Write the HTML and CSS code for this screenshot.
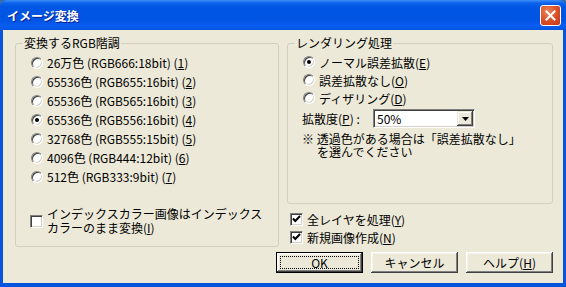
FILE: index.html
```html
<!DOCTYPE html>
<html lang="ja">
<head>
    <meta charset="UTF-8">
    <title>イメージ変換</title>
    <link rel="stylesheet" href="styles.css">
</head>
<body>

<div class="window">
    <div class="titlebar">
        <span class="title">イメージ変換</span>
        <button class="close-btn" aria-label="閉じる">
            <svg width="11" height="11" viewBox="0 0 11 11">
                <path d="M1.5 1.5 L9.5 9.5 M9.5 1.5 L1.5 9.5" stroke="#fff" stroke-width="2" stroke-linecap="square"/>
            </svg>
        </button>
    </div>

    <div class="dialog">
        <div class="panes">
            <fieldset class="group group-left">
                <legend>変換するRGB階調</legend>
                <label class="radio-row"><span class="radio"></span><span>26万色 (RGB666:18bit) (<u>1</u>)</span></label>
                <label class="radio-row"><span class="radio"></span><span>65536色 (RGB655:16bit) (<u>2</u>)</span></label>
                <label class="radio-row"><span class="radio"></span><span>65536色 (RGB565:16bit) (<u>3</u>)</span></label>
                <label class="radio-row"><span class="radio checked"></span><span>65536色 (RGB556:16bit) (<u>4</u>)</span></label>
                <label class="radio-row"><span class="radio"></span><span>32768色 (RGB555:15bit) (<u>5</u>)</span></label>
                <label class="radio-row"><span class="radio"></span><span>4096色 (RGB444:12bit) (<u>6</u>)</span></label>
                <label class="radio-row"><span class="radio"></span><span>512色 (RGB333:9bit) (<u>7</u>)</span></label>

                <label class="check-row check-multi">
                    <span class="checkbox"></span>
                    <span>インデックスカラー画像はインデックス<br>カラーのまま変換(<u>I</u>)</span>
                </label>
            </fieldset>

            <div class="right-col">
                <fieldset class="group group-right">
                    <legend>レンダリング処理</legend>
                    <label class="radio-row narrow"><span class="radio checked"></span><span>ノーマル誤差拡散(<u>E</u>)</span></label>
                    <label class="radio-row narrow"><span class="radio"></span><span>誤差拡散なし(<u>O</u>)</span></label>
                    <label class="radio-row narrow"><span class="radio"></span><span>ディザリング(<u>D</u>)</span></label>

                    <div class="spread-row">
                        <span class="spread-label">拡散度(<u>P</u>) :</span>
                        <div class="combo">
                            <span class="combo-value">50%</span>
                            <span class="combo-arrow">
                                <svg width="7" height="4" viewBox="0 0 7 4"><path d="M0 0 H7 L3.5 4 Z" fill="#000"/></svg>
                            </span>
                        </div>
                    </div>

                    <p class="note">※ 透過色がある場合は「誤差拡散なし」<br><span class="note-indent">を選んでください</span></p>
                </fieldset>

                <label class="check-row first"><span class="checkbox checked"></span><span>全レイヤを処理(<u>Y</u>)</span></label>
                <label class="check-row"><span class="checkbox checked"></span><span>新規画像作成(<u>N</u>)</span></label>
            </div>
        </div>

        <div class="buttons">
            <button class="btn btn-default"><span class="focus">OK</span></button>
            <button class="btn">キャンセル</button>
            <button class="btn">ヘルプ(<u>H</u>)</button>
        </div>
    </div>
</div>

</body>
</html>
```

FILE: styles.css
```css
html, body {
    margin: 0;
    padding: 0;
    background: #3a6ea5;
}

body {
    font-family: "Noto Sans CJK JP", "Liberation Sans", sans-serif;
    font-size: 12px;
    color: #000;
}

u {
    text-decoration: underline;
    text-underline-offset: 1px;
}

.window {
    width: 566px;
    height: 287px;
    display: flex;
    flex-direction: column;
    background: #0855dd;
    border-radius: 7px 7px 0 0;
    box-sizing: border-box;
}

.titlebar {
    height: 30px;
    flex: none;
    display: flex;
    align-items: center;
    justify-content: space-between;
    padding: 0 5px 0 7px;
    border-radius: 7px 7px 0 0;
    background: linear-gradient(to bottom,
        #3d8ff7 0px, #0d62ec 3px, #0056e4 7px, #0054e3 20px, #0a5df0 26px, #0454e0 30px);
}

.title {
    color: #fff;
    font-weight: bold;
    font-size: 12px;
    text-shadow: 1px 1px #0a1e8a;
    line-height: 14px;
    margin-top: 1px;
}

.close-btn {
    width: 21px;
    height: 21px;
    padding: 0;
    border: 1px solid #fff;
    border-radius: 3px;
    background: radial-gradient(circle at 35% 30%, #e9865f 0, #d94c24 55%, #c2391a 100%);
    display: flex;
    align-items: center;
    justify-content: center;
    margin-top: 1px;
}

.dialog {
    flex: 1;
    margin: 0 3px 4px 3px;
    background: #ece9d8;
    padding: 6px 10px 0 12px;
    box-sizing: border-box;
}

.panes {
    display: flex;
    gap: 8px;
    height: 211px;
}

.group {
    margin: 0;
    border: 1px solid #d0d0bf;
    border-radius: 3px;
    padding: 3px 0 0 0;
    box-sizing: border-box;
    min-width: 0;
}

.group legend {
    margin-left: -8px;
    padding: 0 1px;
    line-height: 14px;
}

.group-left {
    width: 264px;
    height: 211px;
    padding-left: 15px;
}

.right-col {
    width: 266px;
}

.group-right {
    width: 266px;
    height: 168px;
    padding-left: 15px;
}

.radio-row {
    display: flex;
    align-items: center;
    gap: 4px;
    height: 19px;
    white-space: nowrap;
}

.radio-row.narrow {
    height: 18px;
}

.radio {
    position: relative;
    width: 12px;
    height: 12px;
    flex: none;
    box-sizing: border-box;
    border-radius: 50%;
    border: 1px solid;
    border-color: #808080 #ffffff #ffffff #808080;
    box-shadow: inset 1px 1px #404040, inset -1px -1px #d4d0c8;
    background: #fff;
}

.radio.checked::after {
    content: "";
    position: absolute;
    left: 3px;
    top: 3px;
    width: 4px;
    height: 4px;
    border-radius: 50%;
    background: #000;
}

.check-row {
    display: flex;
    align-items: center;
    gap: 4px;
    height: 18px;
    margin-left: 3px;
    white-space: nowrap;
}

.check-row.first {
    margin-top: 6px;
}

.check-multi {
    height: auto;
    margin: 21px 0 0 -1px;
    line-height: 14px;
}

.checkbox {
    width: 13px;
    height: 13px;
    flex: none;
    box-sizing: border-box;
    border: 1px solid;
    border-color: #808080 #ffffff #ffffff #808080;
    box-shadow: inset 1px 1px #404040, inset -1px -1px #d4d0c8;
    background: #fff;
}

.checkbox.checked {
    background: #fff url("data:image/svg+xml,%3Csvg xmlns='http://www.w3.org/2000/svg' width='11' height='11' viewBox='0 0 11 11'%3E%3Cpath d='M2 4.5 L4.3 7 L9 2' fill='none' stroke='%23000' stroke-width='2'/%3E%3C/svg%3E") no-repeat 0 0;
}

.spread-row {
    display: flex;
    align-items: center;
    margin: 2px 0 0 -1px;
    height: 19px;
}

.spread-label {
    width: 71px;
}

.combo {
    width: 102px;
    height: 19px;
    box-sizing: border-box;
    display: flex;
    align-items: center;
    justify-content: space-between;
    border: 1px solid;
    border-color: #808080 #ffffff #ffffff #808080;
    box-shadow: inset 1px 1px #404040, inset -1px -1px #d4d0c8;
    background: #fff;
    padding: 1px 1px 1px 3px;
}

.combo-arrow {
    width: 16px;
    height: 15px;
    box-sizing: border-box;
    display: flex;
    align-items: center;
    justify-content: center;
    background: #ece9d8;
    box-shadow: inset -1px -1px #404040, inset 1px 1px #ece9d8, inset -2px -2px #808080, inset 2px 2px #fff;
}

.note {
    margin: 4px 0 0 -1px;
    line-height: 13px;
}

.note-indent {
    margin-left: 15px;
}

.buttons {
    display: flex;
    justify-content: flex-end;
    gap: 8px;
    margin-top: 5px;
}

.btn {
    width: 87px;
    height: 21px;
    padding: 0;
    font: inherit;
    color: #000;
    background: #ece9d8;
    border: none;
    box-shadow: inset -1px -1px #404040, inset 1px 1px #ffffff, inset -2px -2px #808080, inset 2px 2px #f4f3ee;
    display: flex;
    align-items: center;
    justify-content: center;
}

.btn-default {
    border: 1px solid #000;
    padding: 3px;
}

.btn-default .focus {
    flex: 1;
    align-self: stretch;
    display: flex;
    align-items: center;
    justify-content: center;
    border: 1px dotted #000;
}
```
